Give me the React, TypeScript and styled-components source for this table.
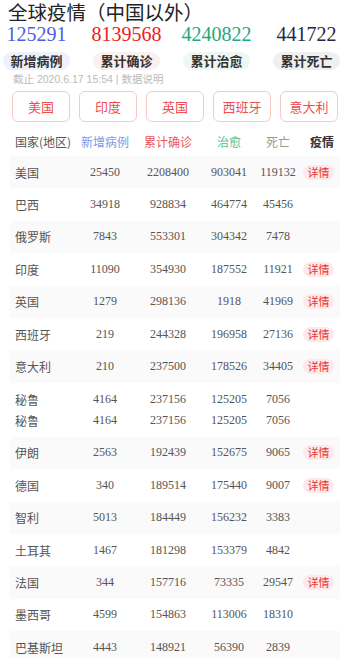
import { FC } from "react";
import styled, { createGlobalStyle } from "styled-components";

const GlobalStyle = createGlobalStyle`
    html, body {
        margin: 0;
        padding: 0;
        background: #fff;
    }
    body {
        width: 348px;
        font-family: "Noto Sans CJK SC", "Liberation Sans", sans-serif;
        color: #333;
    }
`

const CJK = `"Noto Sans CJK SC", sans-serif`;
const SERIF = `"Liberation Serif", "Noto Sans CJK SC", serif`;

const Page = styled.main`
    display: flex;
    flex-direction: column;
    padding-bottom: 12px;
`

const Title = styled.h1`
    margin: 0;
    padding-left: 8px;
    height: 24px;
    font-family: ${CJK};
    font-size: 19.5px;
    font-weight: 400;
    line-height: 24px;
    color: #222;
`

const StatsRow = styled.div`
    display: flex;
    justify-content: space-between;
    padding: 0 8px 0 3px;
`

const StatCol = styled.div`
    display: flex;
    flex-direction: column;
    align-items: center;
    width: 67px;
`

const StatNumber = styled.span<{ $color: string }>`
    font-family: ${SERIF};
    font-size: 20px;
    line-height: 20px;
    color: ${p => p.$color};
`

const StatLabel = styled.span<{ $bg: string }>`
    margin-top: 8px;
    height: 18px;
    line-height: 18px;
    padding: 0 7.5px;
    border-radius: 9px;
    background: ${p => p.$bg};
    font-size: 13px;
    font-weight: 700;
    color: #333;
    white-space: nowrap;
`

const UpdatedAt = styled.p`
    margin: 2px 0 0;
    padding-left: 13px;
    font-family: "Liberation Sans", "Noto Sans CJK SC", sans-serif;
    font-size: 10.5px;
    line-height: 14px;
    color: #bbb;
`

const CountryTabs = styled.nav`
    display: flex;
    gap: 9px;
    margin-top: 5px;
    padding: 0 10px 0 12px;
`

const CountryTab = styled.button`
    width: 58px;
    height: 31px;
    padding: 0;
    border: 1px solid #f6caca;
    border-radius: 6px;
    background: #fff;
    font-family: ${CJK};
    font-size: 13px;
    color: #ec4e4e;
`

const Table = styled.section`
    margin: 4px 8px 0 10px;
`

const COLUMNS = "70px 50px 76px 46px 52px 36px";

const HeadRow = styled.div`
    display: grid;
    grid-template-columns: ${COLUMNS};
    align-items: center;
    height: 30px;
`

const HeadCell = styled.span<{ $color: string; $bold?: boolean; $left?: boolean }>`
    font-family: ${CJK};
    font-size: 12px;
    color: ${p => p.$color};
    font-weight: ${p => (p.$bold ? 700 : 400)};
    text-align: ${p => (p.$left ? "left" : "center")};
    padding-left: ${p => (p.$left ? "5px" : "0")};
    white-space: nowrap;
`

const Row = styled.div<{ $striped: boolean; $multi: boolean }>`
    display: flex;
    flex-direction: column;
    justify-content: center;
    height: ${p => (p.$multi ? "54px" : "32.4px")};
    box-sizing: border-box;
    background: ${p => (p.$striped ? "#fafafa" : "#fff")};
`

const Line = styled.div<{ $multi: boolean }>`
    display: grid;
    grid-template-columns: ${COLUMNS};
    align-items: center;
    height: ${p => (p.$multi ? "21px" : "100%")};
`

const Country = styled.span`
    padding-left: 5px;
    font-family: ${CJK};
    font-size: 12px;
    color: #555;
    white-space: nowrap;
`

const Num = styled.span`
    text-align: center;
    font-family: ${SERIF};
    font-size: 12px;
    color: #555;
`

const DetailBadge = styled.span`
    justify-self: start;
    margin-left: -1px;
    width: 31px;
    height: 15px;
    line-height: 15px;
    border-radius: 8px;
    background: #fde9e9;
    text-align: center;
    font-family: ${CJK};
    font-size: 11px;
    color: #e83434;
`

type Line = [string, number, number, number, number];
type CountryRow = { lines: Line[]; detail?: boolean };

const stats = [
    { value: "125291", color: "#4b5fe2", label: "新增病例", bg: "#eef1fb" },
    { value: "8139568", color: "#ee1c25", label: "累计确诊", bg: "#fcefef" },
    { value: "4240822", color: "#22a87a", label: "累计治愈", bg: "#edf8f3" },
    { value: "441722", color: "#1d2747", label: "累计死亡", bg: "#efefef" },
];

const tabs = ["美国", "印度", "英国", "西班牙", "意大利"];

const rows: CountryRow[] = [
    { lines: [["美国", 25450, 2208400, 903041, 119132]], detail: true },
    { lines: [["巴西", 34918, 928834, 464774, 45456]] },
    { lines: [["俄罗斯", 7843, 553301, 304342, 7478]] },
    { lines: [["印度", 11090, 354930, 187552, 11921]], detail: true },
    { lines: [["英国", 1279, 298136, 1918, 41969]], detail: true },
    { lines: [["西班牙", 219, 244328, 196958, 27136]], detail: true },
    { lines: [["意大利", 210, 237500, 178526, 34405]], detail: true },
    {
        lines: [
            ["秘鲁", 4164, 237156, 125205, 7056],
            ["秘鲁", 4164, 237156, 125205, 7056],
        ],
    },
    { lines: [["伊朗", 2563, 192439, 152675, 9065]], detail: true },
    { lines: [["德国", 340, 189514, 175440, 9007]], detail: true },
    { lines: [["智利", 5013, 184449, 156232, 3383]] },
    { lines: [["土耳其", 1467, 181298, 153379, 4842]] },
    { lines: [["法国", 344, 157716, 73335, 29547]], detail: true },
    { lines: [["墨西哥", 4599, 154863, 113006, 18310]] },
    { lines: [["巴基斯坦", 4443, 148921, 56390, 2839]] },
];

const App: FC = () => {
    return (
        <>
            <GlobalStyle />
            <Page>
                <Title>全球疫情（中国以外）</Title>

                <StatsRow>
                    {stats.map(s => (
                        <StatCol key={s.label}>
                            <StatNumber $color={s.color}>{s.value}</StatNumber>
                            <StatLabel $bg={s.bg}>{s.label}</StatLabel>
                        </StatCol>
                    ))}
                </StatsRow>

                <UpdatedAt>截止 2020.6.17 15:54 | 数据说明</UpdatedAt>

                <CountryTabs>
                    {tabs.map(t => <CountryTab key={t}>{t}</CountryTab>)}
                </CountryTabs>

                <Table>
                    <HeadRow>
                        <HeadCell $color="#555" $left>国家(地区)</HeadCell>
                        <HeadCell $color="#8196e8">新增病例</HeadCell>
                        <HeadCell $color="#e85656">累计确诊</HeadCell>
                        <HeadCell $color="#55c096">治愈</HeadCell>
                        <HeadCell $color="#9a9a9a">死亡</HeadCell>
                        <HeadCell $color="#333" $bold>疫情</HeadCell>
                    </HeadRow>

                    {rows.map((row, i) => {
                        const multi = row.lines.length > 1;
                        return (
                            <Row key={i} $striped={i % 2 === 0} $multi={multi}>
                                {row.lines.map((l, j) => (
                                    <Line key={j} $multi={multi}>
                                        <Country>{l[0]}</Country>
                                        <Num>{l[1]}</Num>
                                        <Num>{l[2]}</Num>
                                        <Num>{l[3]}</Num>
                                        <Num>{l[4]}</Num>
                                        {row.detail && <DetailBadge>详情</DetailBadge>}
                                    </Line>
                                ))}
                            </Row>
                        );
                    })}
                </Table>
            </Page>
        </>
    );
}

export default App;
